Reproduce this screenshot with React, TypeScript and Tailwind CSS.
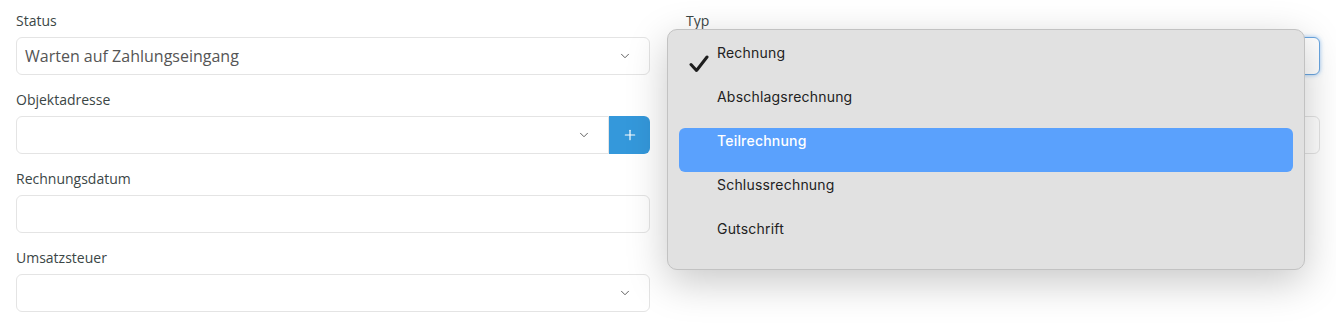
import React from 'react';
import { ChevronDown, Plus } from 'lucide-react';

const types = ['Rechnung', 'Abschlagsrechnung', 'Teilrechnung', 'Schlussrechnung', 'Gutschrift'];

const Label: React.FC<{ children: React.ReactNode }> = ({ children }) => (
  <div className="h-5 mb-[6px] text-sm leading-5 text-[#3b4646]">{children}</div>
);

const Field: React.FC<{ label: string; children: React.ReactNode }> = ({ label, children }) => (
  <div className="mb-[15px]">
    <Label>{label}</Label>
    {children}
  </div>
);

const SelectBox: React.FC<{ value?: string; focused?: boolean }> = ({ value, focused }) => (
  <div
    className={`h-[38px] flex items-center justify-between pl-2 pr-[17px] bg-white rounded-md border ${
      focused ? 'border-[#6aa6e0] shadow-[0_0_4px_rgba(70,150,230,0.55)]' : 'border-[#e4e4e4]'
    }`}
  >
    <span className="text-base text-[#555]">{value}</span>
    <ChevronDown size={14} strokeWidth={1.6} className="text-[#555]" />
  </div>
);

// native-looking popup list opened over the "Typ" select
const TypeMenu: React.FC = () => (
  <div
    className="absolute left-[-19px] top-[18px] w-[638px] h-[241px] pt-[10px] px-[11px] rounded-[10px] bg-[#e1e1e1] border border-[#c2c2c2] shadow-[0_12px_40px_rgba(0,0,0,0.22)]"
    style={{ fontFamily: 'Inter, "Liberation Sans", sans-serif' }}
  >
    {types.map((t, i) => (
      <div
        key={t}
        className={`relative h-[44px] pl-[38px] pt-[3px] rounded-md text-sm leading-5 tracking-[0.2px] ${
          i === 2 ? 'bg-[#5aa1fd] text-white font-medium' : 'text-[#222]'
        }`}
      >
        {i === 0 && (
          <svg className="absolute left-[10px] top-[15px]" width="20" height="18" viewBox="0 0 20 18">
            <path d="M2 9.5 L7.5 15.5 L18 2" fill="none" stroke="#1e1e1e" strokeWidth="3" strokeLinecap="round" strokeLinejoin="round" />
          </svg>
        )}
        {t}
      </div>
    ))}
  </div>
);

export default function App() {
  return (
    <div className="w-[1336px] h-[334px] bg-white overflow-hidden" style={{ fontFamily: '"Open Sans", sans-serif' }}>
      <div className="grid grid-cols-2 gap-x-[36px] px-4 pt-[11px]">
        <div>
          <Field label="Status">
            <SelectBox value="Warten auf Zahlungseingang" />
          </Field>
          <Field label="Objektadresse">
            <div className="flex h-[38px]">
              <div className="flex-1 flex items-center justify-end pr-[17px] bg-white border border-[#e4e4e4] rounded-l-md">
                <ChevronDown size={14} strokeWidth={1.6} className="text-[#555]" />
              </div>
              <button className="w-[41px] flex items-center justify-center bg-[#3498db] text-white rounded-r-md">
                <Plus size={16} strokeWidth={1.8} />
              </button>
            </div>
          </Field>
          <Field label="Rechnungsdatum">
            <div className="h-[38px] bg-white border border-[#e4e4e4] rounded-md" />
          </Field>
          <Field label="Umsatzsteuer">
            <SelectBox />
          </Field>
        </div>
        <div className="relative">
          <Field label="Typ">
            <SelectBox focused />
          </Field>
          <Field label="">
            <div className="h-[38px] bg-white border border-[#e4e4e4] rounded-md" />
          </Field>
          <TypeMenu />
        </div>
      </div>
    </div>
  );
}
